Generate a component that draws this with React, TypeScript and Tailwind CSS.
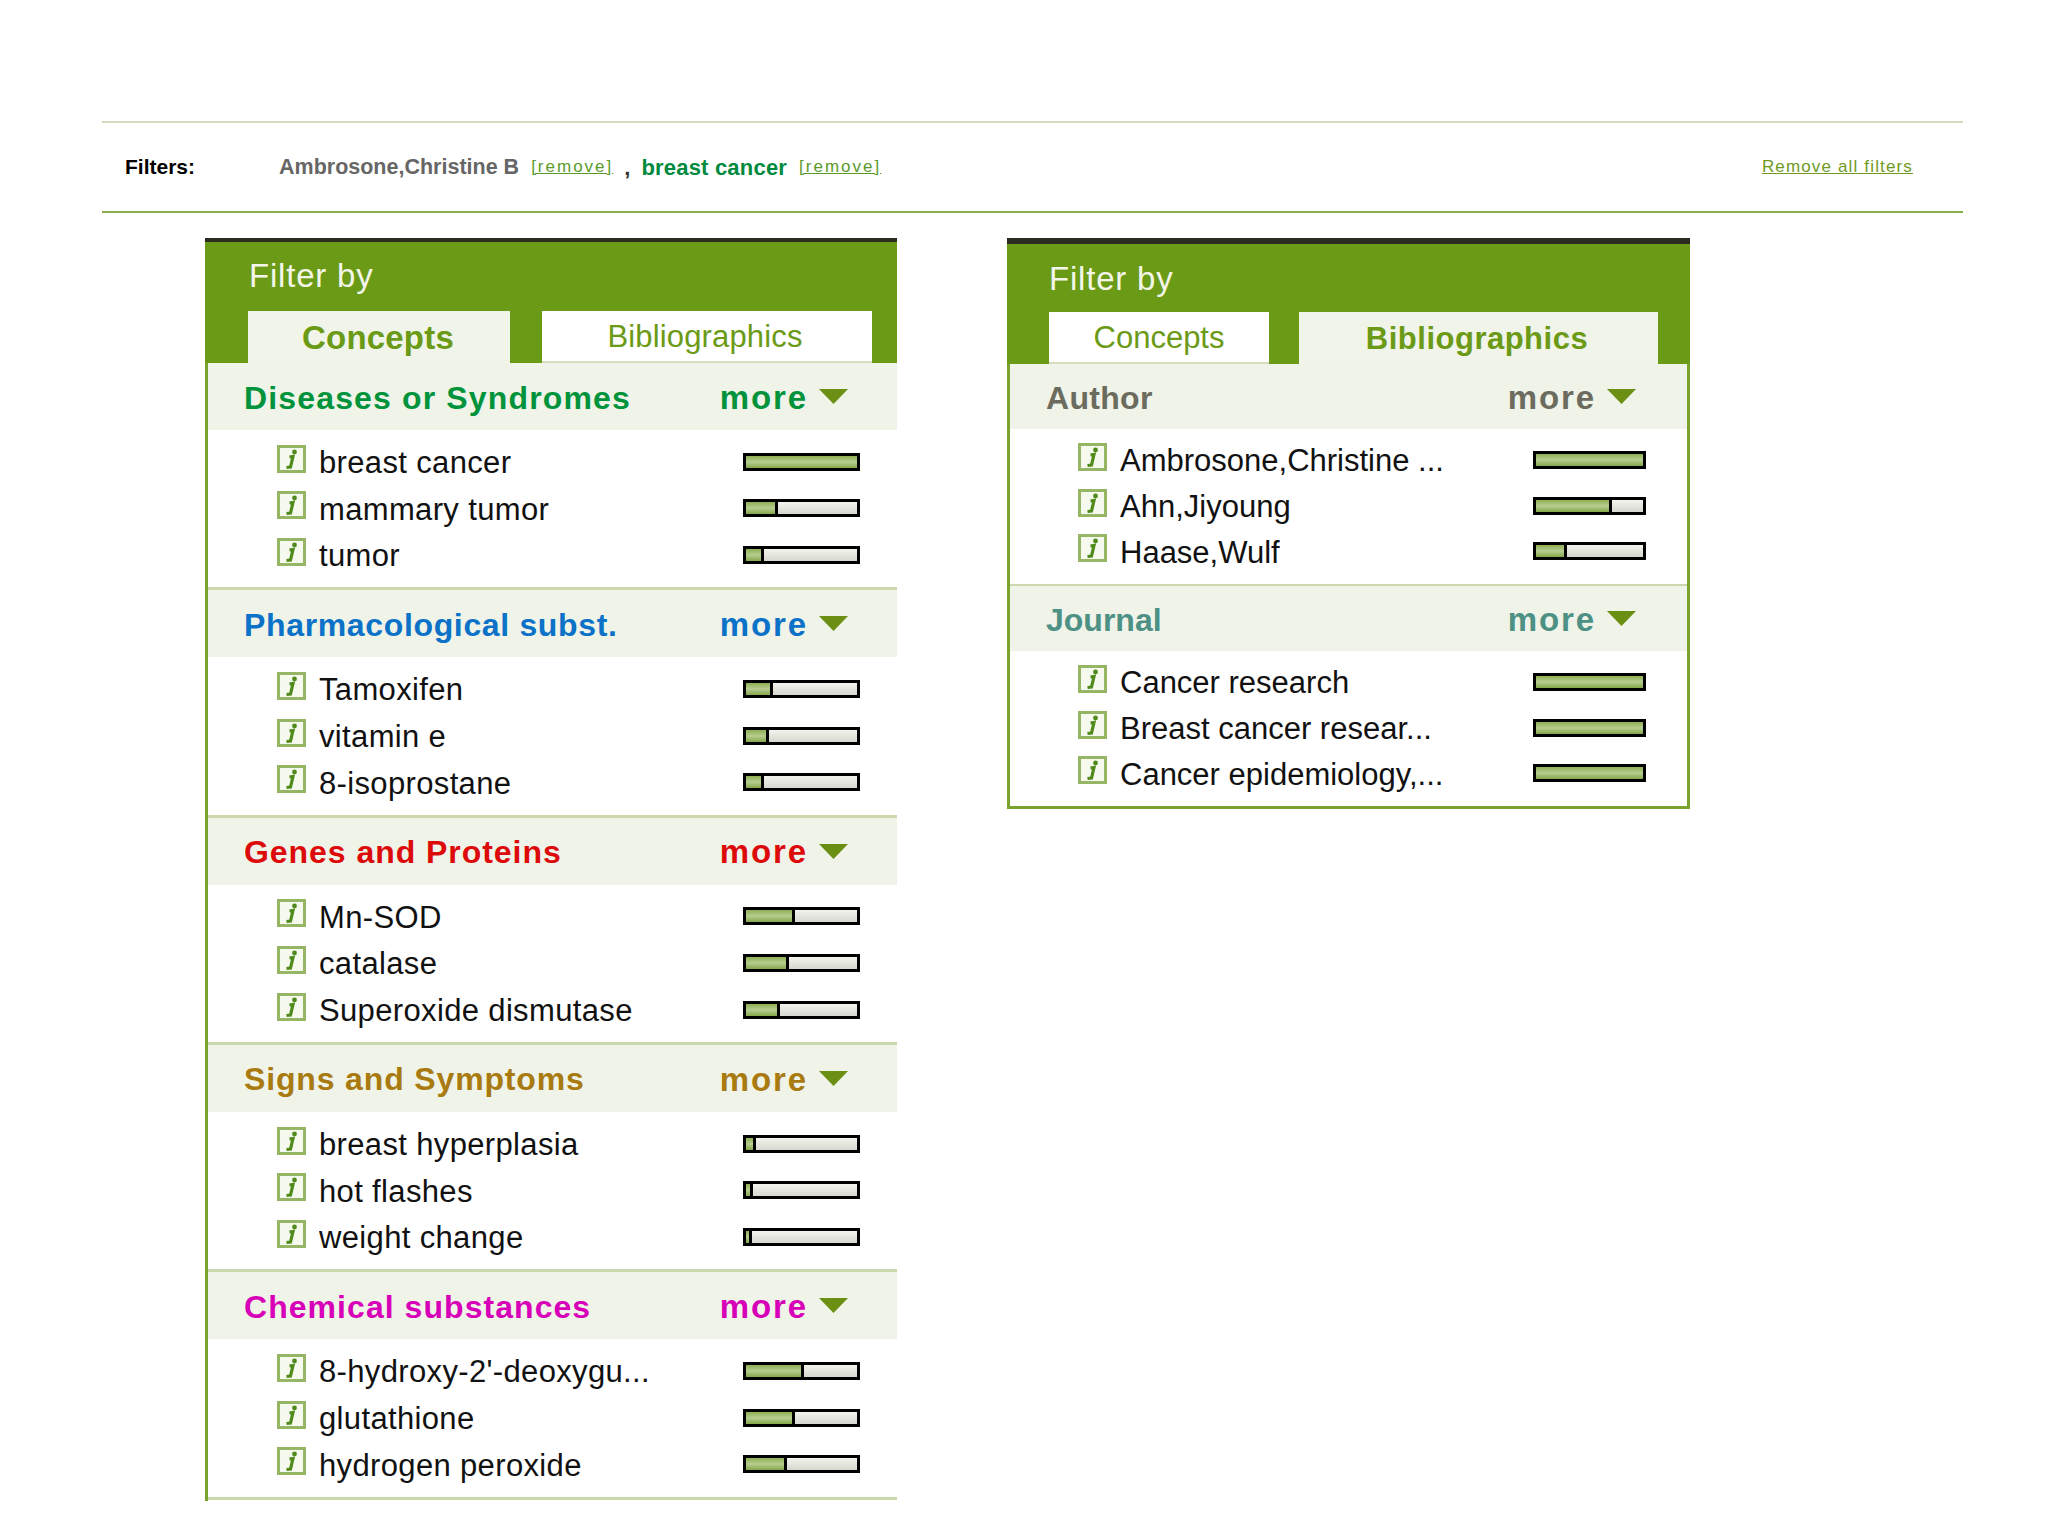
import React from "react";

interface Item {
  label: string;
  pct: number;
}

interface Section {
  title: string;
  color: string;
  tracking: string;
  items: Item[];
}

const conceptSections: Section[] = [
  {
    title: "Diseases or Syndromes",
    color: "text-[#00933b]",
    tracking: "tracking-[1.15px]",
    items: [
      { label: "breast cancer", pct: 100 },
      { label: "mammary tumor", pct: 29 },
      { label: "tumor", pct: 16 },
    ],
  },
  {
    title: "Pharmacological subst.",
    color: "text-[#0b72c8]",
    tracking: "tracking-[0.65px]",
    items: [
      { label: "Tamoxifen", pct: 24 },
      { label: "vitamin e", pct: 21 },
      { label: "8-isoprostane", pct: 16 },
    ],
  },
  {
    title: "Genes and Proteins",
    color: "text-[#dd0a0a]",
    tracking: "tracking-[0.95px]",
    items: [
      { label: "Mn-SOD", pct: 44 },
      { label: "catalase", pct: 39 },
      { label: "Superoxide dismutase", pct: 31 },
    ],
  },
  {
    title: "Signs and Symptoms",
    color: "text-[#a87a10]",
    tracking: "tracking-[0.85px]",
    items: [
      { label: "breast hyperplasia", pct: 9 },
      { label: "hot flashes", pct: 6 },
      { label: "weight change", pct: 5 },
    ],
  },
  {
    title: "Chemical substances",
    color: "text-[#d700b8]",
    tracking: "tracking-[1.05px]",
    items: [
      { label: "8-hydroxy-2'-deoxygu...", pct: 52 },
      { label: "glutathione", pct: 44 },
      { label: "hydrogen peroxide", pct: 37 },
    ],
  },
];

const biblioSections: Section[] = [
  {
    title: "Author",
    color: "text-[#6b6b5e]",
    tracking: "tracking-[0.3px]",
    items: [
      { label: "Ambrosone,Christine ...", pct: 100 },
      { label: "Ahn,Jiyoung", pct: 71 },
      { label: "Haase,Wulf", pct: 29 },
    ],
  },
  {
    title: "Journal",
    color: "text-[#4d9084]",
    tracking: "tracking-[0px]",
    items: [
      { label: "Cancer research", pct: 100 },
      { label: "Breast cancer resear...", pct: 100 },
      { label: "Cancer epidemiology,...", pct: 100 },
    ],
  },
];

function InfoIcon() {
  return (
    <svg width="29" height="28" viewBox="0 0 29 28" className="mb-[6px] shrink-0">
      <rect x="1.5" y="1.5" width="26" height="25" fill="#f6f9ee" stroke="#96b565" strokeWidth="3" />
      <path d="M9.5 22.5 L13.5 22 L16 11.5 L12.5 12" fill="none" stroke="#4f8a1a" strokeWidth="3.2" />
      <circle cx="17.5" cy="7" r="2.4" fill="#4f8a1a" />
    </svg>
  );
}

function Meter({ pct, wide }: { pct: number; wide: boolean }) {
  return (
    <div
      className={`flex h-[18px] shrink-0 border-[3px] border-black bg-linear-to-b from-[#f4f4ee] to-[#d6d7cf] ${
        wide ? "w-[117px] mr-[37px]" : "w-[113px] mr-[41px]"
      }`}
    >
      <div
        className={`h-full bg-linear-to-b from-[#8fae50] via-[#b6cd90] to-[#86a748] ${
          pct < 100 ? "border-r-[3px] border-black" : ""
        }`}
        style={{ width: `${pct}%` }}
      />
    </div>
  );
}

function SectionBlock({ section, wide, last }: { section: Section; wide: boolean; last: boolean }) {
  return (
    <div
      className={
        last
          ? wide
            ? "border-b-[3px] border-[#cbd8ae]"
            : ""
          : wide
            ? "border-b-[3px] border-[#cbd8ae]"
            : "border-b-[2px] border-[#cbd8ae]"
      }
    >
      <div
        className={`flex items-center justify-between bg-[#eff3e8] font-bold ${section.color} ${
          wide ? "h-[67px] pl-[36px] pr-[49px]" : "h-[65px] pl-[36px] pr-[51px]"
        }`}
      >
        <span className={`pt-[2px] text-[32px] ${section.tracking}`}>{section.title}</span>
        <span className="flex items-center gap-[11px]">
          <span className="pt-[2px] text-[33px] tracking-[1.9px]">more</span>
          <svg width="29" height="15" viewBox="0 0 29 15">
            <path d="M0 0 H29 L14.5 15 Z" fill="#6b8f12" />
          </svg>
        </span>
      </div>
      <div className={wide ? "h-[157.33px] pt-[8.5px]" : last ? "h-[155px] pt-[8px]" : "h-[155px] pt-[8px]"}>
        {section.items.map((item) => (
          <div
            key={item.label}
            className={`flex items-center ${wide ? "h-[46.67px] pl-[69px]" : "h-[45.8px] pl-[68px]"}`}
          >
            <InfoIcon />
            <span
              className={`ml-[13px] flex-1 truncate pt-[3px] text-[31px] text-[#111] ${
                wide ? "tracking-[0.35px]" : ""
              }`}
            >
              {item.label}
            </span>
            <Meter pct={item.pct} wide={wide} />
          </div>
        ))}
      </div>
    </div>
  );
}

function FilterPanel({ active, sections }: { active: "concepts" | "biblio"; sections: Section[] }) {
  const wide = active === "concepts";
  const tabBase = "flex h-[52px] items-center justify-center pt-[2px]";
  const tabOn = "bg-[#f0f4e9] font-bold text-[#6b9a16]";
  const tabOff = "bg-white border-b-[2px] border-[#d5dfc0] text-[#6b9a16]";
  return (
    <div className={wide ? "w-[692px]" : "w-[683px]"}>
      <div
        className={`bg-[#6b9a16] ${
          wide ? "h-[125px] border-t-[4px] border-[#2b2b20]" : "h-[126px] border-t-[6px] border-[#2b2b20]"
        }`}
      >
        <div
          className={`flex items-center text-[33px] tracking-[0.8px] text-[#f2f5e8] ${
            wide ? "h-[69px] pb-[2px] pl-[44px]" : "h-[68px] pt-[1px] pl-[42px]"
          }`}
        >
          Filter by
        </div>
        {wide ? (
          <div className="flex gap-[32px] pl-[43px]">
            <div className={`${tabBase} ${tabOn} w-[262px] text-[33px] tracking-[0.2px] pr-[2px]`}>Concepts</div>
            <div className={`${tabBase} ${tabOff} w-[330px] pr-[4px] text-[31px] tracking-[0.15px]`}>Bibliographics</div>
          </div>
        ) : (
          <div className="flex gap-[30px] pl-[42px]">
            <div className={`${tabBase} ${tabOff} w-[220px] text-[31px]`}>Concepts</div>
            <div className={`${tabBase} ${tabOn} w-[359px] pr-[3px] text-[31px] tracking-[0.5px]`}>Bibliographics</div>
          </div>
        )}
      </div>
      <div className={wide ? "border-l-[3px] border-[#7aa32c] pb-[1px]" : "border-x-[3px] border-b-[3px] border-[#7aa32c]"}>
        {sections.map((section, i) => (
          <SectionBlock key={section.title} section={section} wide={wide} last={i === sections.length - 1} />
        ))}
      </div>
    </div>
  );
}

function RemoveLink() {
  return <a className="pt-[4px] text-[17px] tracking-[2px] text-[#5a9a2a] underline">[remove]</a>;
}

export default function App() {
  return (
    <div className="min-h-[1536px] bg-white pt-[121px] pl-[102px] pr-[85px] font-['Liberation_Sans',sans-serif]">
      <div className="flex h-[92px] items-center justify-between border-y-2 border-t-[#d3dcc0] border-b-[#8aac4a] pl-[23px] pr-[50px]">
        <div className="flex items-center font-bold">
          <span className="w-[154px] text-[21px] text-black">Filters:</span>
          <span className="text-[21.5px] text-[#666]">Ambrosone,Christine B</span>
          <span className="ml-[12px] font-normal">
            <RemoveLink />
          </span>
          <span className="ml-[11px] text-[22px] text-[#333]">,</span>
          <span className="ml-[11px] text-[22px] tracking-[0.2px] text-[#008a3e]">breast cancer</span>
          <span className="ml-[12px] font-normal">
            <RemoveLink />
          </span>
        </div>
        <a className="text-[17px] tracking-[1.15px] text-[#6f9a1e] underline">Remove all filters</a>
      </div>
      <div className="mt-[25px] flex items-start gap-[110px] pl-[103px]">
        <FilterPanel active="concepts" sections={conceptSections} />
        <FilterPanel active="biblio" sections={biblioSections} />
      </div>
    </div>
  );
}
